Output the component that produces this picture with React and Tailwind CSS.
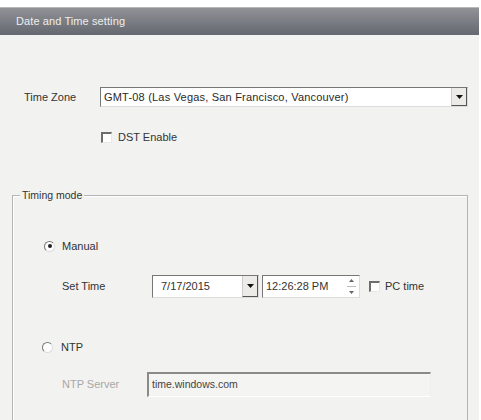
import React from "react";

function Check({ className = "" }) {
  return (
    <span
      className={
        "inline-block w-[11px] h-[11px] bg-white border-t-[2px] border-l-[2px] border-t-[#6d6d6d] border-l-[#6d6d6d] border-b border-r border-b-[#e8e8e8] border-r-[#e8e8e8] " +
        className
      }
    />
  );
}

function Radio({ checked }) {
  return (
    <span className="relative inline-block w-[11px] h-[11px] rounded-full bg-white border border-[#777] border-r-[#ddd] border-b-[#ddd]">
      {checked && (
        <span className="absolute left-[2.5px] top-[2.5px] w-[4px] h-[4px] rounded-full bg-[#222]" />
      )}
    </span>
  );
}

function DropBtn() {
  return (
    <span className="flex items-center justify-center w-[16px] h-full bg-[#ecebe8] border-l border-[#ccc] border-r border-r-[#555] border-b border-b-[#555]">
      <svg width="7" height="4" viewBox="0 0 7 4">
        <path d="M0 0 L7 0 L3.5 4 Z" fill="#111" />
      </svg>
    </span>
  );
}

export default function App() {
  return (
    <div
      className="w-[481px] h-[420px] bg-white overflow-hidden text-[11px] text-[#333]"
      style={{ fontFamily: '"Liberation Sans", Arial, sans-serif' }}
    >
      <div className="h-[7px] bg-white" />
      <div className="w-[479px] h-[28px] flex items-center pl-[16px] bg-gradient-to-b from-[#909296] to-[#656870] border-t border-[#b8b8b8]">
        <span className="text-[11px] text-[#eeeeee] tracking-[0.1px]">Date and Time setting</span>
      </div>
      <div className="w-[479px] h-[385px] bg-[#f2f2f0] flex flex-col">
        <div className="mt-[52px] flex items-center h-[20px]">
          <span className="w-[100px] pl-[24px] text-[11px]">Time Zone</span>
          <div className="flex items-stretch w-[368px] h-[20px] bg-white border-t border-l border-[#777] border-r border-r-[#ddd] border-b border-b-[#ddd]">
            <span className="flex-1 flex items-center pl-[3px] text-[11px] tracking-[0.2px] text-[#2a2a2a]">
              GMT-08 (Las Vegas, San Francisco, Vancouver)
            </span>
            <DropBtn />
          </div>
        </div>
        <div className="mt-[23px] flex items-center h-[14px] pl-[101px]">
          <Check />
          <span className="ml-[6px] text-[11px]">DST Enable</span>
        </div>
        <div className="mt-[51px] relative ml-[12px] w-[456px] flex-1 border-t border-l border-r border-[#b5b5b5] shadow-[inset_1px_1px_0_#ffffff]">
          <span className="absolute -top-[7px] left-[7px] px-[2px] bg-[#f2f2f0] text-[10.5px] leading-[13px]">
            Timing mode
          </span>
          <div className="mt-[43px] flex items-center pl-[31px] h-[14px]">
            <Radio checked />
            <span className="ml-[7px] text-[11px]">Manual</span>
          </div>
          <div className="mt-[22px] flex items-center h-[23px]">
            <span className="w-[139px] pl-[49px] text-[11px]">Set Time</span>
            <div className="flex items-stretch w-[107px] h-[23px] bg-white border-t border-l border-[#777] border-r border-r-[#ddd] border-b border-b-[#ddd]">
              <span className="flex-1 flex items-center pl-[8px] text-[11px]">7/17/2015</span>
              <DropBtn />
            </div>
            <div className="ml-[3px] flex items-stretch w-[98px] h-[23px] bg-white border-t border-l border-[#777] border-r border-r-[#ddd] border-b border-b-[#ddd]">
              <span className="flex-1 flex items-center pl-[3px] text-[11px]">12:26:28 PM</span>
              <span className="w-[16px] flex flex-col items-center justify-center gap-[4px]">
                <svg width="5" height="3" viewBox="0 0 5 3"><path d="M0 3 L5 3 L2.5 0 Z" fill="#666" /></svg>
                <span className="w-[9px] h-px bg-[#bbb]" />
                <svg width="5" height="3" viewBox="0 0 5 3"><path d="M0 0 L5 0 L2.5 3 Z" fill="#666" /></svg>
              </span>
            </div>
            <Check className="ml-[9px]" />
            <span className="ml-[5px] text-[11px]">PC time</span>
          </div>
          <div className="mt-[42px] flex items-center pl-[29px] h-[14px]">
            <Radio />
            <span className="ml-[8px] text-[11px]">NTP</span>
          </div>
          <div className="mt-[18px] flex items-center h-[25px]">
            <span className="w-[134px] pl-[49px] text-[11px] text-[#a8a8a8]">NTP Server</span>
            <div className="flex items-center w-[284px] h-[25px] bg-[#f4f4f2] border-t-[2px] border-l-[2px] border-[#8a8a8a] border-r border-r-[#eee] border-b border-b-[#fff] pl-[3px] text-[10.5px] text-[#444]">
              time.windows.com
            </div>
          </div>
        </div>
      </div>
    </div>
  );
}
